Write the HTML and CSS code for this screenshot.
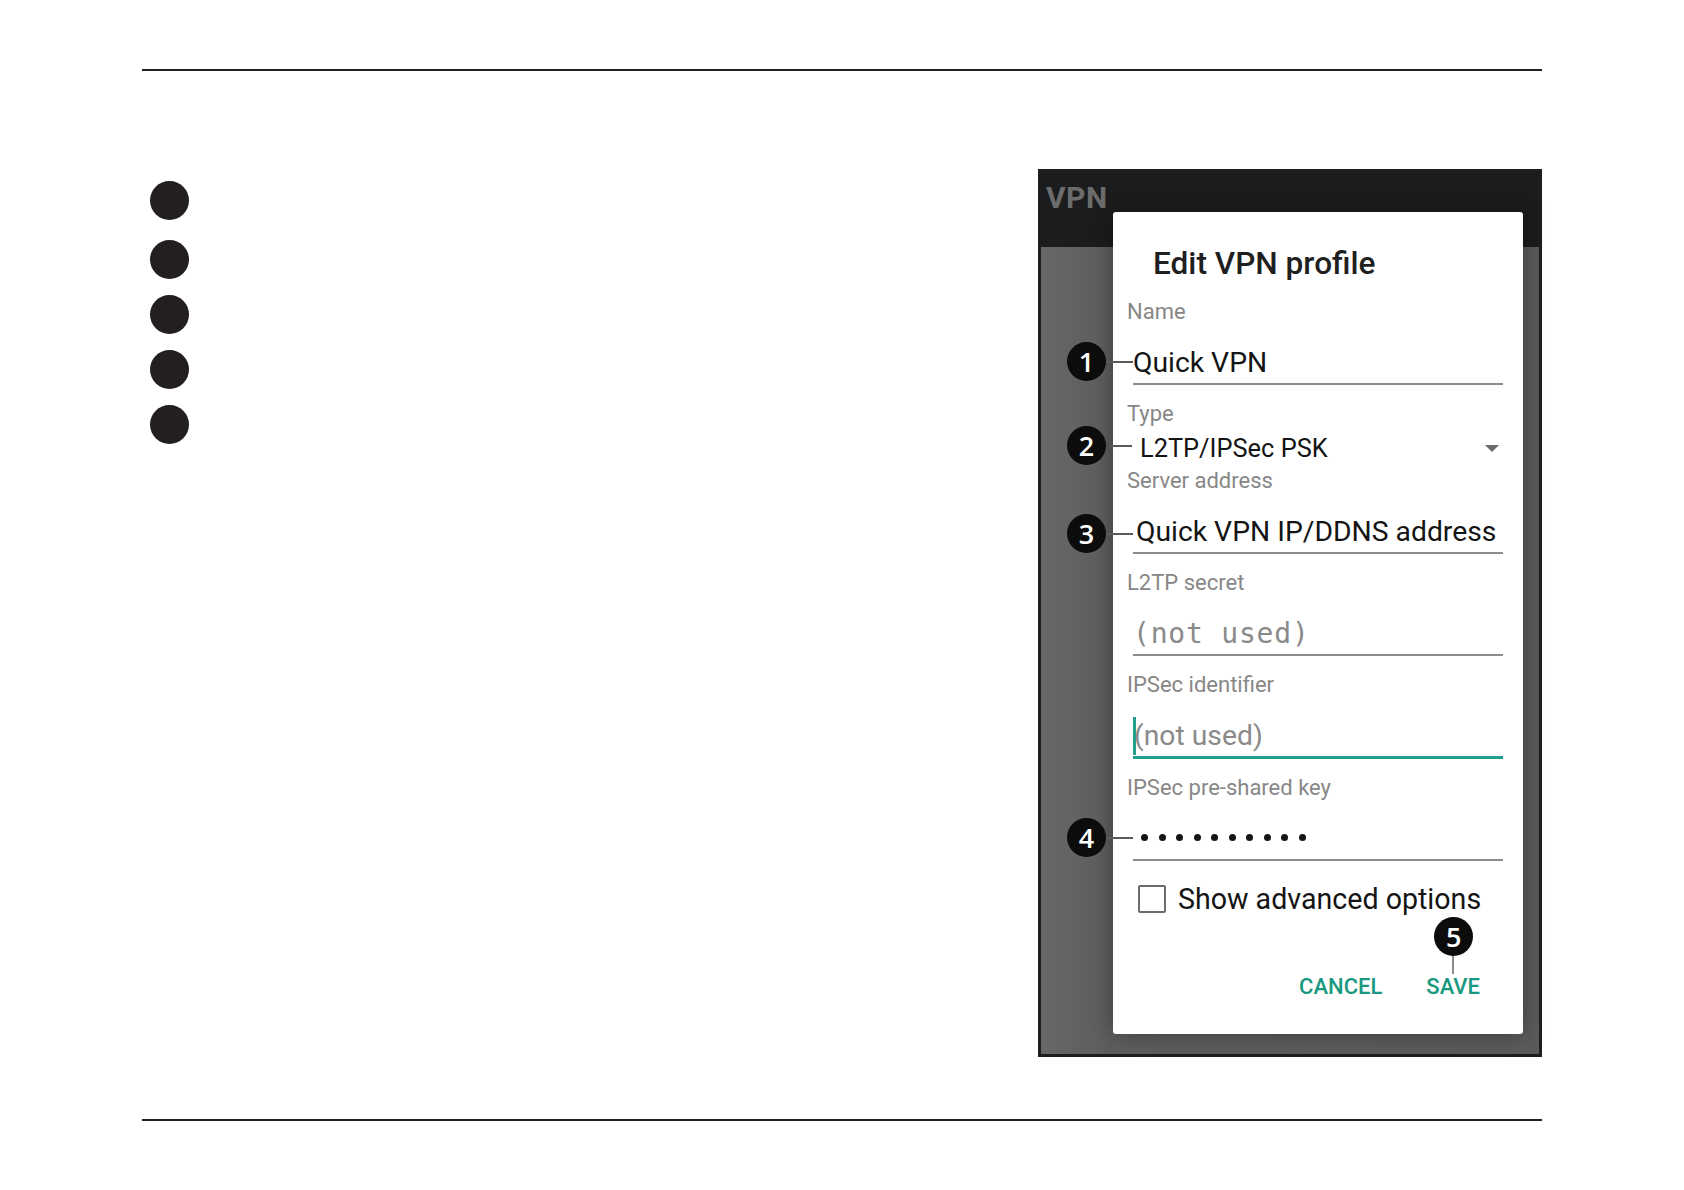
FILE: index.html
```html
<!DOCTYPE html>
<html lang="en">
<head>
    <meta charset="UTF-8">
    <title>Edit VPN profile</title>
<link rel="stylesheet" href="styles.css">
</head>
<body>
    <div class="page">
        <div class="rule"></div>

        <div class="content">
            <div class="markers">
                <span class="marker"></span>
                <span class="marker"></span>
                <span class="marker"></span>
                <span class="marker"></span>
                <span class="marker"></span>
            </div>

            <div class="phone">
                <div class="appbar">VPN</div>
                <div class="screen"></div>

                <div class="dialog">
                    <h2 class="dialog-title">Edit VPN profile</h2>

                    <div class="field">
                        <div class="field-label">Name</div>
                        <div class="field-input">
                            <span class="callout">1</span>
                            <span class="value">Quick VPN</span>
                        </div>
                    </div>

                    <div class="field field-type">
                        <div class="field-label">Type</div>
                        <div class="field-select">
                            <span class="callout">2</span>
                            <span class="value">L2TP/IPSec PSK</span>
                            <span class="caret"></span>
                        </div>
                    </div>

                    <div class="field field-server">
                        <div class="field-label">Server address</div>
                        <div class="field-input">
                            <span class="callout">3</span>
                            <span class="value">Quick VPN IP/DDNS address</span>
                        </div>
                    </div>

                    <div class="field">
                        <div class="field-label">L2TP secret</div>
                        <div class="field-input">
                            <span class="value mono hint">(not used)</span>
                        </div>
                    </div>

                    <div class="field">
                        <div class="field-label">IPSec identifier</div>
                        <div class="field-input focused">
                            <span class="cursor"></span>
                            <span class="value hint">(not used)</span>
                        </div>
                    </div>

                    <div class="field field-key">
                        <div class="field-label">IPSec pre-shared key</div>
                        <div class="field-input">
                            <span class="callout">4</span>
                            <span class="dots">
                                <i></i><i></i><i></i><i></i><i></i><i></i><i></i><i></i><i></i><i></i>
                            </span>
                        </div>
                    </div>

                    <label class="check-row">
                        <span class="checkbox"></span>
                        <span>Show advanced options</span>
                    </label>

                    <div class="actions">
                        <button class="action">CANCEL</button>
                        <button class="action save">
                            <span class="callout callout-up">5</span>
                            SAVE
                        </button>
                    </div>
                </div>
            </div>
        </div>

        <div class="rule rule-bottom"></div>
    </div>
</body>
</html>
```

FILE: styles.css
```css
body {
    margin: 0;
    background: #ffffff;
    font-family: Roboto, "Liberation Sans", Arial, sans-serif;
}

.page {
    padding: 69px 142px 0;
}

.rule {
    height: 2px;
    background-color: #231f20;
}

.rule-bottom {
    margin-top: 62px;
}

.content {
    display: flex;
    justify-content: space-between;
    margin-top: 98px;
}

.markers {
    display: flex;
    flex-direction: column;
    gap: 16px;
    padding: 12px 0 0 8px;
}

.marker {
    display: block;
    width: 39px;
    height: 39px;
    border-radius: 50%;
    background-color: #231f20;
}

.marker:first-child {
    margin-bottom: 4px;
}

/* phone screenshot */
.phone {
    position: relative;
    width: 498px;
    height: 882px;
    border: 3px solid #1e1e1e;
    display: flex;
    flex-direction: column;
    background-color: #5e5e5e;
}

.appbar {
    height: 75px;
    box-sizing: border-box;
    padding: 8px 0 0 5px;
    background-color: #1b1c1e;
    color: #6c6c6c;
    font-size: 30px;
    line-height: 36px;
    font-weight: 700;
    letter-spacing: 0.5px;
}

.screen {
    flex: 1;
    background: linear-gradient(90deg, #676767 0%, #5d5d5d 14%, #5a5a5a 100%);
}

.dialog {
    position: absolute;
    left: 72px;
    top: 40px;
    width: 410px;
    height: 822px;
    box-sizing: border-box;
    padding: 34px 20px 0 14px;
    background-color: #ffffff;
    border-radius: 3px;
    box-shadow: 0 0 22px rgba(0, 0, 0, 0.35);
}

.dialog-title {
    margin: 0 0 17px 26px;
    font-size: 31.6px;
    line-height: 36px;
    font-weight: 500;
    color: #1f1f1f;
}

.field {
    margin-bottom: 16px;
}

.field-label {
    font-size: 22px;
    line-height: 26px;
    color: #878787;
}

.field-input {
    position: relative;
    display: flex;
    align-items: center;
    height: 34px;
    margin: 21px 0 0 6px;
    padding-bottom: 3px;
    border-bottom: 2px solid #8c8c8c;
}

.field-input.focused {
    border-bottom: 3px solid #22a08c;
}

.value {
    font-size: 28.3px;
    line-height: 34px;
    color: #141414;
    white-space: nowrap;
}

.hint {
    color: #8a8a8a;
}

.mono {
    font-family: "DejaVu Sans Mono", "Liberation Mono", monospace;
    font-size: 28px;
    letter-spacing: 0.8px;
}

.field-server .value {
    padding-left: 3px;
}

.field-type {
    margin-bottom: 4px;
}

.field-key {
    margin-bottom: 22px;
}

.field-select {
    position: relative;
    display: flex;
    align-items: center;
    justify-content: space-between;
    height: 32px;
    margin: 5px 4px 0 6px;
    padding-left: 7px;
}

.field-select .value {
    font-size: 25.4px;
    line-height: 32px;
    margin-right: auto;
}

.caret {
    width: 0;
    height: 0;
    border-left: 7px solid transparent;
    border-right: 7px solid transparent;
    border-top: 7px solid #6a6a6a;
}

.cursor {
    width: 3px;
    height: 38px;
    margin-right: -2px;
    background-color: #22a08c;
}

.dots {
    display: flex;
    gap: 10.5px;
    padding-left: 8px;
    margin-top: -3px;
}

.dots i {
    display: block;
    width: 7px;
    height: 7px;
    border-radius: 50%;
    background-color: #151515;
}

/* numbered callouts over the screenshot */
.callout {
    position: absolute;
    left: -66px;
    top: 15px;
    width: 39px;
    height: 39px;
    margin-top: -19px;
    border-radius: 50%;
    background-color: #0c0c0c;
    color: #ffffff;
    font-family: "Open Sans", "Liberation Sans", sans-serif;
    font-size: 27px;
    font-weight: 600;
    line-height: 39px;
    text-align: center;
}

.callout::after {
    content: "";
    position: absolute;
    left: 39px;
    top: 19px;
    width: 27px;
    height: 2px;
    background-color: #5a5a5a;
}

.field-server .callout {
    top: 18px;
}

.field-select .callout {
    top: 13px;
}

.field-select .callout::after {
    left: 43px;
    width: 22px;
}

.check-row {
    display: flex;
    align-items: center;
    gap: 12px;
    margin-left: 11px;
    font-size: 28.6px;
    line-height: 32px;
    color: #141414;
}

.checkbox {
    width: 24px;
    height: 24px;
    border: 2px solid #6b6b6b;
    border-radius: 2px;
}

.actions {
    display: flex;
    justify-content: flex-end;
    gap: 44px;
    margin: 59px 23px 0 0;
}

.action {
    position: relative;
    padding: 0;
    border: none;
    background: none;
    font-family: Roboto, "Liberation Sans", sans-serif;
    font-size: 22px;
    line-height: 26px;
    font-weight: 500;
    color: #18997f;
}

.callout-up {
    left: 50%;
    top: -57px;
    margin: 0 0 0 -19px;
}

.callout-up::after {
    left: 18px;
    top: 39px;
    width: 2px;
    height: 18px;
    background-color: #8a8a8a;
}
```
